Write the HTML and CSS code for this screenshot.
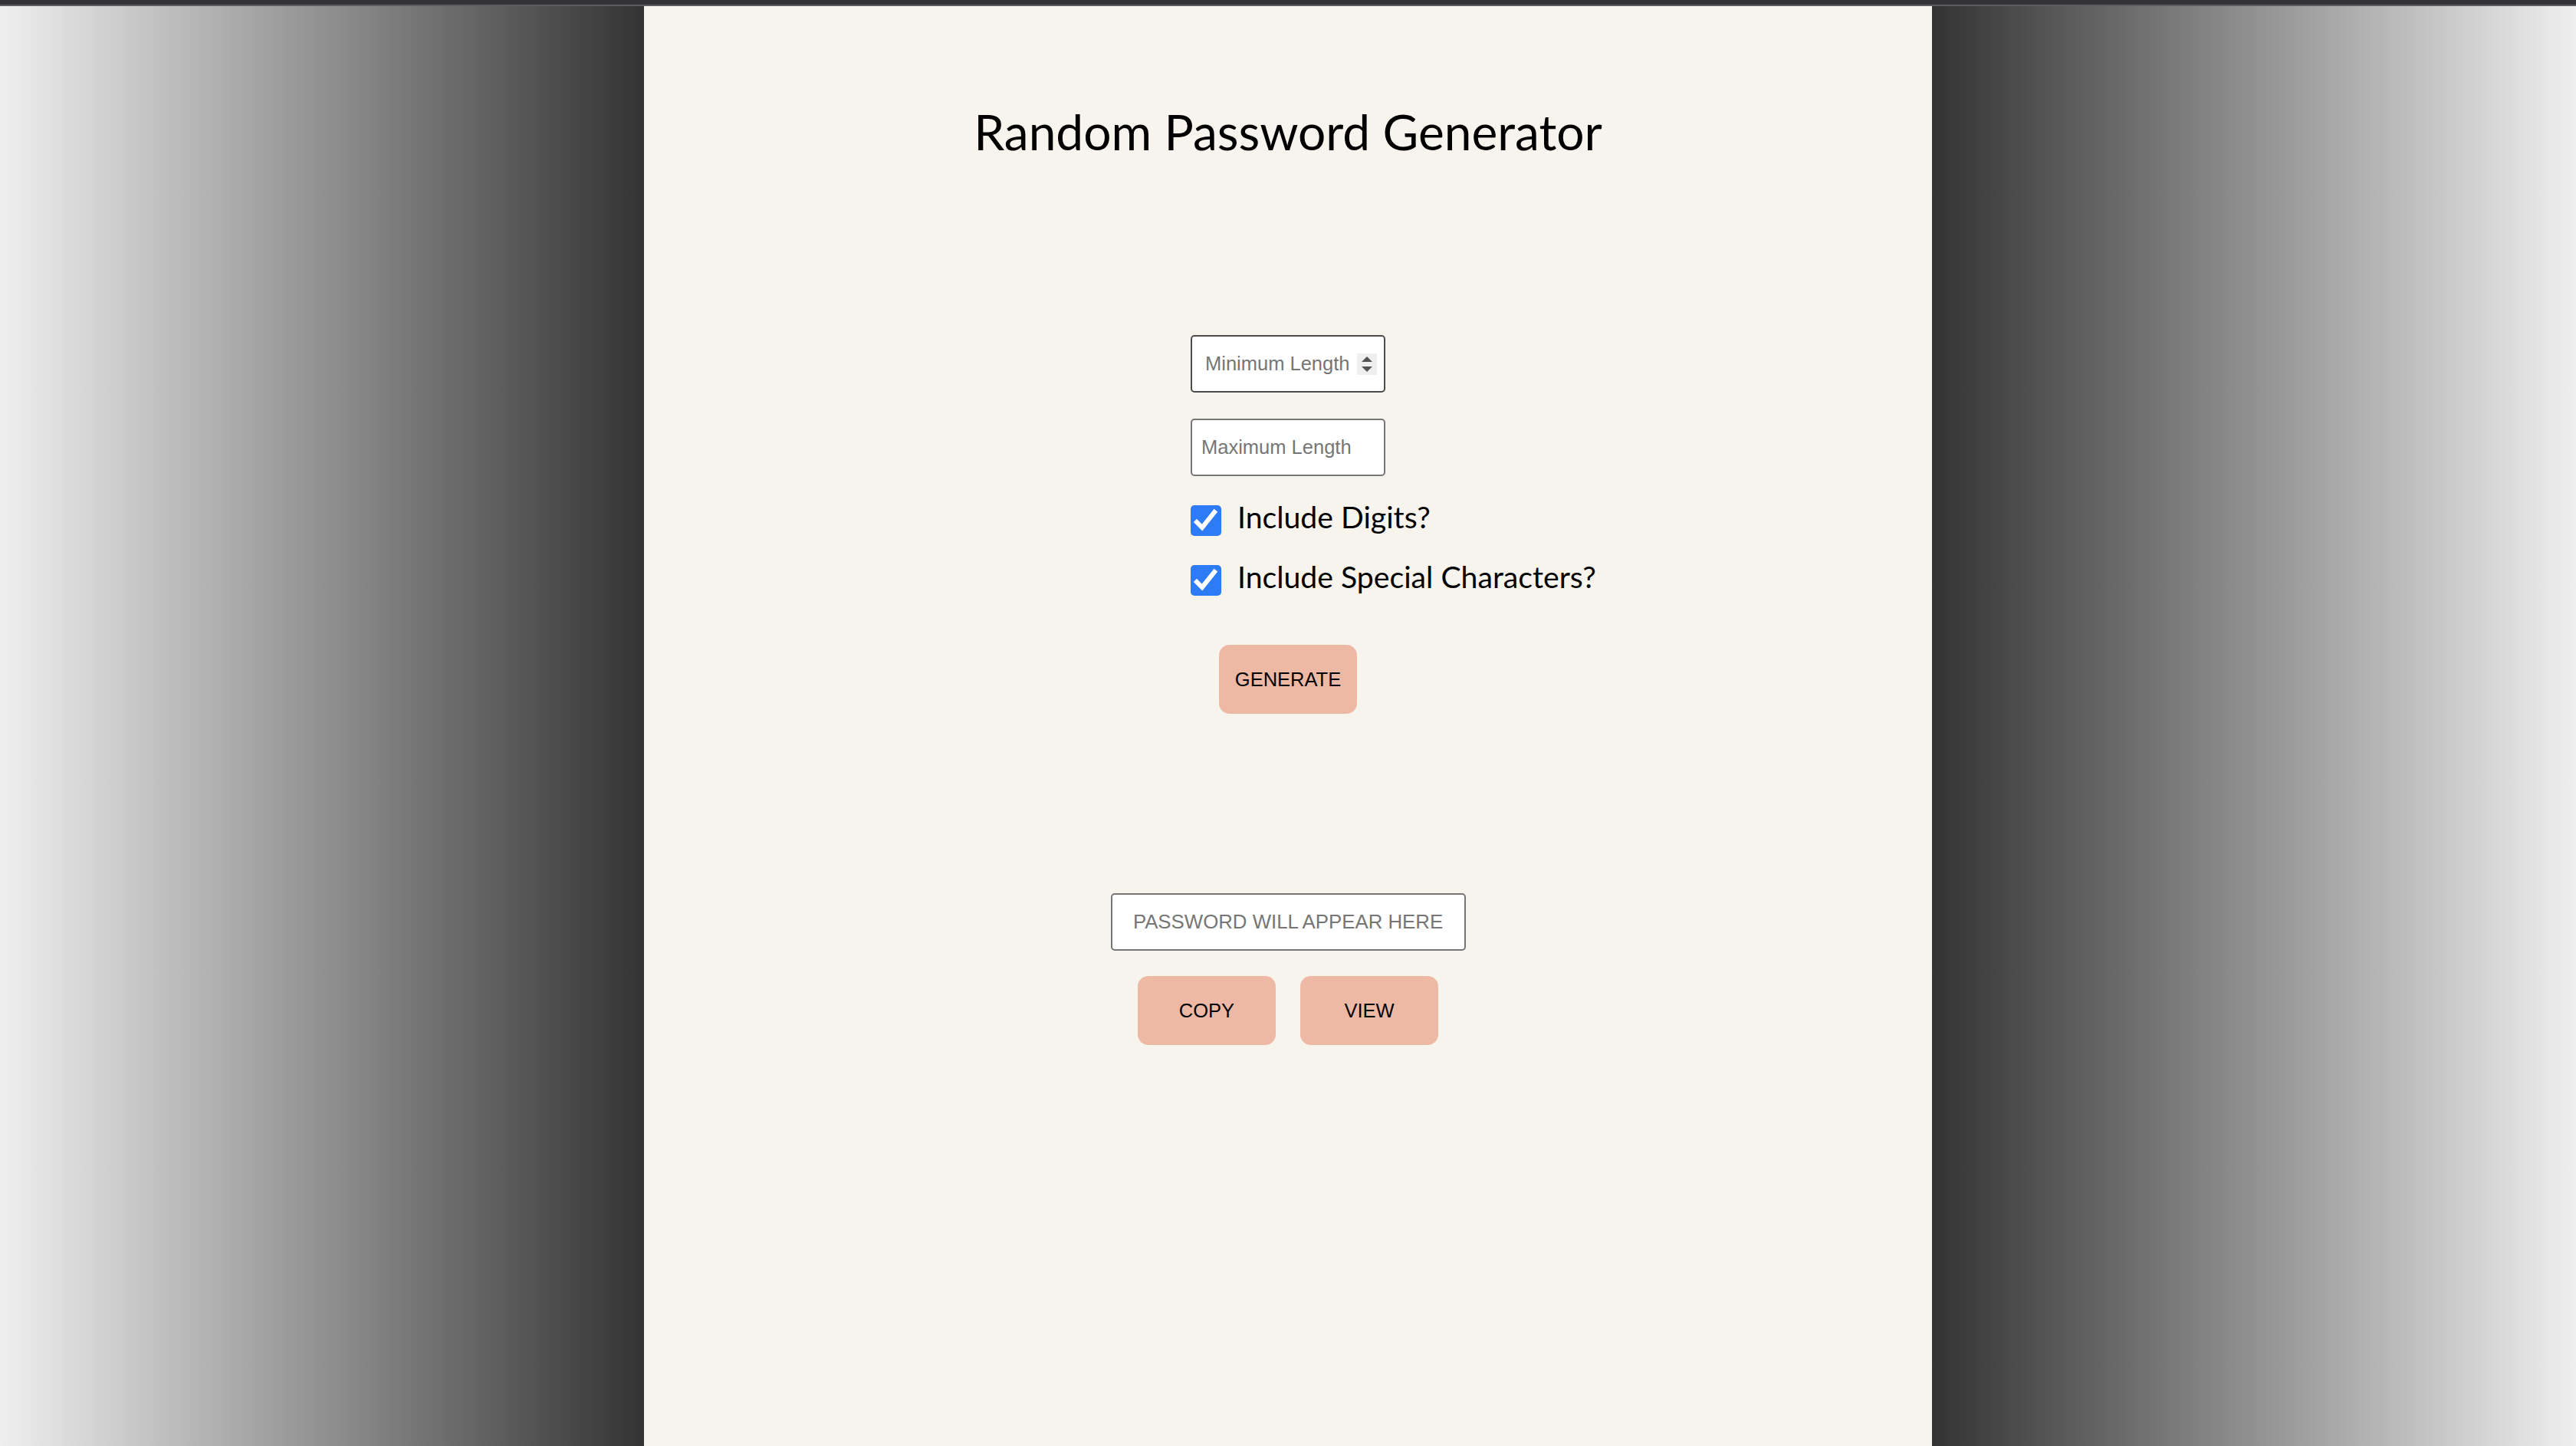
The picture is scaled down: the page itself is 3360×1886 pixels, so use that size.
FILE: index.html
```html
<!DOCTYPE html>
<html lang="en">
<head>
<meta charset="utf-8">
<title>Random Password Generator</title>
<link rel="stylesheet" href="styles.css">
</head>
<body>
<div class="topbar"></div>
<main class="stage">
  <section class="panel">
    <h1 class="title">Random Password Generator</h1>
    <form class="options" onsubmit="return false;">
      <div class="num-field">
        <input class="num-input" type="text" placeholder="Minimum Length">
        <span class="spinner">
          <svg width="16" height="22" viewBox="0 0 16 22"><polygon points="8,1 15,8 1,8" fill="#555"/><polygon points="1,14 15,14 8,21" fill="#555"/></svg>
        </span>
      </div>
      <input class="text-field" type="text" placeholder="Maximum Length">
      <label class="check">
        <input class="check-input" type="checkbox" checked>
        <span class="check-box"><svg width="40" height="40" viewBox="0 0 40 40"><polyline points="8,22 15,29 31,9" fill="none" stroke="#fff" stroke-width="6" stroke-linecap="square"/></svg></span>
        <span class="check-text">Include Digits?</span>
      </label>
      <label class="check">
        <input class="check-input" type="checkbox" checked>
        <span class="check-box"><svg width="40" height="40" viewBox="0 0 40 40"><polyline points="8,22 15,29 31,9" fill="none" stroke="#fff" stroke-width="6" stroke-linecap="square"/></svg></span>
        <span class="check-text">Include Special Characters?</span>
      </label>
    </form>
    <div class="generate-row">
      <button class="btn" type="button">GENERATE</button>
    </div>
    <div class="output">
      <input class="password-field" type="text" placeholder="PASSWORD WILL APPEAR HERE" readonly>
      <div class="actions">
        <button class="btn" type="button">COPY</button>
        <button class="btn" type="button">VIEW</button>
      </div>
    </div>
  </section>
</main>
</body>
</html>
```
FILE: styles.css
```css
html, body {
  margin: 0;
  padding: 0;
}
body {
  min-height: 100vh;
  display: flex;
  flex-direction: column;
  font-family: "Liberation Sans", Arial, sans-serif;
}
.topbar {
  height: 6px;
  background: #333438;
  border-bottom: 2px solid #5d5d63;
}
.stage {
  flex: 1;
  display: flex;
  justify-content: center;
  background: linear-gradient(to right, #efefef 0%, #333333 25%, #333333 75%, #efefef 100%);
}
.panel {
  width: 1680px;
  background: #f7f4ed;
  display: flex;
  flex-direction: column;
  align-items: center;
}
.title {
  margin: 126px 0 0;
  font-family: Lato, "Open Sans", sans-serif;
  font-weight: 400;
  font-size: 64px;
  line-height: 76px;
  color: #000;
}
.options {
  width: 254px;
  margin-top: 227px;
  display: flex;
  flex-direction: column;
  align-items: flex-start;
}
.num-field {
  box-sizing: border-box;
  width: 254px;
  height: 75px;
  border: 2px solid #4b4b4b;
  border-radius: 5px;
  background: #fff;
  display: flex;
  align-items: center;
  padding: 0 9px 0 17px;
}
.num-input {
  flex: 1;
  min-width: 0;
  border: 0;
  outline: 0;
  padding: 0;
  background: transparent;
  font-family: "Liberation Sans", Arial, sans-serif;
  font-size: 25.5px;
  color: #000;
}
.num-input::placeholder,
.text-field::placeholder,
.password-field::placeholder {
  color: #767676;
  opacity: 1;
}
.spinner {
  width: 26px;
  height: 28px;
  background: #efefef;
  display: flex;
  align-items: center;
  justify-content: center;
}
.text-field {
  box-sizing: border-box;
  width: 254px;
  height: 75px;
  margin-top: 34px;
  border: 2px solid #767676;
  border-radius: 5px;
  background: #fff;
  padding: 0 12px;
  font-family: "Liberation Sans", Arial, sans-serif;
  font-size: 25.5px;
  outline: 0;
}
.check {
  display: flex;
  align-items: center;
  height: 40px;
  margin-top: 38px;
  white-space: nowrap;
  cursor: pointer;
}
.check + .check {
  margin-top: 38px;
}
.check-input {
  display: none;
}
.check-box {
  width: 40px;
  height: 40px;
  border-radius: 5px;
  background: #2d7bf5;
  display: flex;
  flex: none;
}
.check-text {
  margin-left: 21px;
  margin-bottom: 12px;
  font-family: Lato, "Open Sans", sans-serif;
  font-size: 39.2px;
  color: #000;
}
.generate-row {
  margin-top: 64px;
}
.btn {
  width: 180px;
  height: 90px;
  border: 0;
  border-radius: 14px;
  background: #edb9a5;
  color: #000;
  font-family: "Liberation Sans", Arial, sans-serif;
  font-size: 25.5px;
  padding: 0;
  cursor: pointer;
}
.output {
  margin-top: 234px;
  display: flex;
  flex-direction: column;
  align-items: center;
}
.password-field {
  box-sizing: border-box;
  width: 463px;
  height: 75px;
  border: 2px solid #767676;
  border-radius: 5px;
  background: #fff;
  text-align: center;
  font-family: "Liberation Sans", Arial, sans-serif;
  font-size: 25.8px;
  outline: 0;
  padding: 0 10px;
}
.actions {
  margin-top: 33px;
  display: flex;
  gap: 32px;
}
```
